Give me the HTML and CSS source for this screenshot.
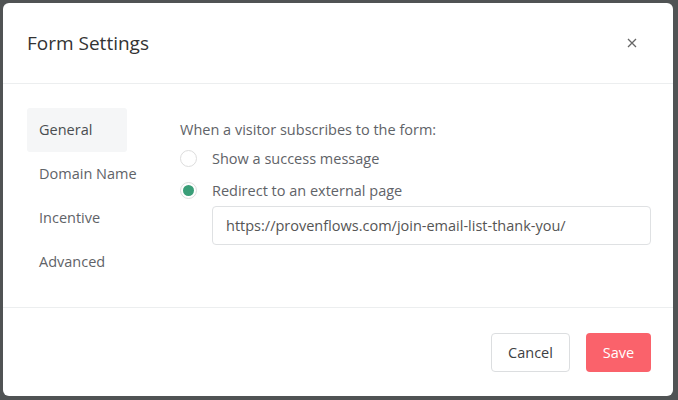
FILE: index.html
```html
<!DOCTYPE html>
<html lang="en">
<head>
<meta charset="UTF-8">
<meta name="viewport" content="width=device-width, initial-scale=1.0">
<title>Form Settings</title>
<link rel="stylesheet" href="styles.css">
</head>
<body>
    <div class="modal">
        <div class="modal-header">
            <h1>Form Settings</h1>
            <button class="close" type="button" aria-label="Close">
                <svg width="10" height="10" viewBox="0 0 10 10"><path d="M1 1L9 9M9 1L1 9" stroke="#666" stroke-width="1.3" fill="none"/></svg>
            </button>
        </div>

        <div class="modal-body">
            <ul class="side-nav">
                <li class="active">General</li>
                <li>Domain Name</li>
                <li>Incentive</li>
                <li>Advanced</li>
            </ul>

            <div class="settings">
                <p class="question">When a visitor subscribes to the form:</p>
                <label class="option">
                    <span class="radio"></span>
                    Show a success message
                </label>
                <label class="option">
                    <span class="radio checked"></span>
                    Redirect to an external page
                </label>
                <input class="url-input" type="text" value="https://provenflows.com/join-email-list-thank-you/">
            </div>
        </div>

        <div class="modal-footer">
            <button class="btn btn-cancel" type="button">Cancel</button>
            <button class="btn btn-save" type="button">Save</button>
        </div>
    </div>
</body>
</html>
```

FILE: styles.css
```css
body {
    margin: 0;
    background-color: #505354;
    font-family: "Open Sans", Arial, sans-serif;
    color: #555;
}

.modal {
    margin: 3px;
    width: 670px;
    height: 393px;
    background: #fff;
    border-radius: 6px;
    display: flex;
    flex-direction: column;
}

.modal-header {
    height: 80px;
    border-bottom: 1px solid #eceeef;
    display: flex;
    align-items: center;
    justify-content: space-between;
    padding: 0 24px;
}

.modal-header h1 {
    margin: 0;
    font-size: 19px;
    font-weight: 400;
    color: #333;
}

.close {
    background: none;
    border: none;
    padding: 5px;
    margin-right: 7px;
    cursor: pointer;
    display: flex;
}

.modal-body {
    height: 224px;
    display: flex;
    padding: 24px 24px 0 24px;
    box-sizing: border-box;
    border-bottom: 1px solid #eceeef;
}

.side-nav {
    list-style: none;
    margin: 0;
    padding: 0;
    width: 153px;
    flex-shrink: 0;
}

.side-nav li {
    width: 100px;
    height: 44px;
    line-height: 44px;
    padding-left: 12px;
    box-sizing: border-box;
    font-size: 14.5px;
    color: #5f6368;
    border-radius: 3px;
    white-space: nowrap;
}

.side-nav li.active {
    background-color: #f5f6f7;
    color: #4a4d50;
}

.settings {
    flex: 1;
    padding-top: 12px;
}

.question {
    margin: 0 0 2px 0;
    font-size: 14.5px;
    line-height: 20px;
    color: #5f6368;
}

.option {
    display: flex;
    align-items: center;
    height: 32px;
    font-size: 14.5px;
    color: #5f6368;
}

.radio {
    width: 17px;
    height: 17px;
    border: 1px solid #ddd;
    border-radius: 50%;
    box-sizing: border-box;
    margin-right: 15px;
    display: flex;
    align-items: center;
    justify-content: center;
}

.radio.checked::after {
    content: "";
    width: 11px;
    height: 11px;
    border-radius: 50%;
    background-color: #3a9e78;
}

.url-input {
    display: block;
    margin: 0 0 0 32px;
    width: 439px;
    height: 39px;
    box-sizing: border-box;
    border: 1px solid #dfe1e3;
    border-radius: 4px;
    padding: 0 13px;
    font-family: "Open Sans", Arial, sans-serif;
    font-size: 14.5px;
    color: #555;
}

.modal-footer {
    flex: 1;
    display: flex;
    justify-content: flex-end;
    align-items: center;
    padding: 0 22px 0 0;
    gap: 16px;
}

.btn {
    height: 39px;
    border-radius: 4px;
    font-family: "Open Sans", Arial, sans-serif;
    font-size: 14.5px;
    cursor: pointer;
}

.btn-cancel {
    width: 79px;
    background: #fff;
    border: 1px solid #dcdee0;
    color: #3d4043;
}

.btn-save {
    width: 65px;
    background-color: #fa626b;
    border: none;
    color: #fff;
}
```
